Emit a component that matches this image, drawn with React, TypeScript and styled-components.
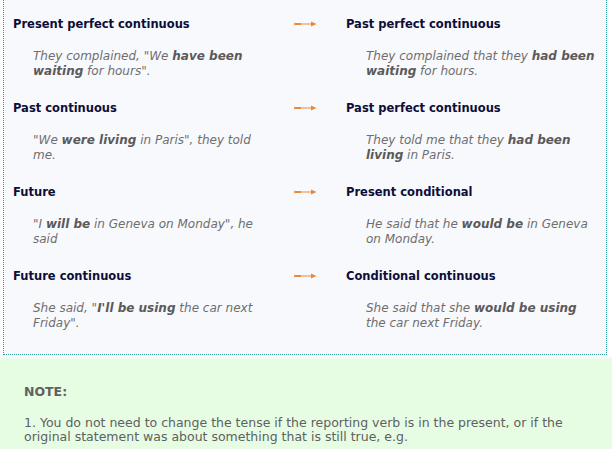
import styled, { createGlobalStyle } from 'styled-components'

const GlobalStyle = createGlobalStyle`
  html, body {
    margin: 0;
    padding: 0;
    background: #ffffff;
  }

  body {
    font-family: 'DejaVu Sans', Verdana, sans-serif;
  }
`

const PageStyled = styled.div`
  width: 612px;
  height: 449px;
  overflow: hidden;
`

const TableBoxStyled = styled.div`
  margin-left: 3px;
  width: 604px;
  padding: 16px 0 23px 9px;
  box-sizing: border-box;

  background-color: #f8f9fd;
  border: 1px dotted #2a9d9d;
  border-top: 0;
`

const RowStyled = styled.div`
  display: grid;
  grid-template-columns: 280px 53px 1fr;
  margin-bottom: 21px;

  &:last-child {
    margin-bottom: 0;
  }
`

const CellStyled = styled.div`
  display: flex;
  flex-direction: column;
  gap: 17px;
`

const TenseStyled = styled.div`
  height: 16px;
  font-size: 11.5px;
  line-height: 16px;
  font-weight: bold;
  color: #0d0d38;
`

const ExampleStyled = styled.div<{ $width: number }>`
  width: ${({ $width }) => $width}px;
  padding-left: 20px;

  font-size: 12px;
  line-height: 15px;
  font-style: italic;
  color: #6e6e6e;

  & b {
    color: #5a5a5a;
  }
`

const ArrowCellStyled = styled.div`
  height: 16px;
  display: flex;
  align-items: center;
`

const NoteStyled = styled.div`
  margin-top: 2px;
  padding: 26px 14px 20px 24px;

  background-color: #e6fde4;
  border-top: 2px solid #effdec;

  font-size: 12.5px;
  line-height: 14px;
  color: #606060;
`

const NoteTitleStyled = styled.div`
  font-weight: bold;
  margin-bottom: 17px;
`

const Arrow = () => (
  <svg width="24" height="6" viewBox="0 0 24 6">
    <path d="M1 1.5 L4 3 L1 4.5 Z" fill="#eaa060" />
    <rect x="2" y="2" width="6" height="2" fill="#e88a3a" />
    <rect x="8" y="2.5" width="12" height="1" fill="#e88a3a" />
    <path d="M18 0.5 L23.5 3 L18 5.5 Z" fill="#e88a3a" />
  </svg>
)

type Row = {
  from: string
  to: string
  direct: React.ReactNode
  reported: React.ReactNode
}

const rows: Row[] = [
  {
    from: 'Present perfect continuous',
    to: 'Past perfect continuous',
    direct: (
      <>
        They complained, "We <b>have been waiting</b> for hours".
      </>
    ),
    reported: (
      <>
        They complained that they <b>had been waiting</b> for hours.
      </>
    ),
  },
  {
    from: 'Past continuous',
    to: 'Past perfect continuous',
    direct: (
      <>
        "We <b>were living</b> in Paris", they told me.
      </>
    ),
    reported: (
      <>
        They told me that they <b>had been living</b> in Paris.
      </>
    ),
  },
  {
    from: 'Future',
    to: 'Present conditional',
    direct: (
      <>
        "I <b>will be</b> in Geneva on Monday", he said
      </>
    ),
    reported: (
      <>
        He said that he <b>would be</b> in Geneva on Monday.
      </>
    ),
  },
  {
    from: 'Future continuous',
    to: 'Conditional continuous',
    direct: (
      <>
        She said, "<b>I'll be using</b> the car next Friday".
      </>
    ),
    reported: (
      <>
        She said that she <b>would be using</b> the car next Friday.
      </>
    ),
  },
]

export default function App() {
  return (
    <PageStyled>
      <GlobalStyle />

      <TableBoxStyled>
        {rows.map((row) => (
          <RowStyled key={row.from}>
            <CellStyled>
              <TenseStyled>{row.from}</TenseStyled>
              <ExampleStyled $width={232}>{row.direct}</ExampleStyled>
            </CellStyled>

            <ArrowCellStyled>
              <Arrow />
            </ArrowCellStyled>

            <CellStyled>
              <TenseStyled>{row.to}</TenseStyled>
              <ExampleStyled $width={232}>{row.reported}</ExampleStyled>
            </CellStyled>
          </RowStyled>
        ))}
      </TableBoxStyled>

      <NoteStyled>
        <NoteTitleStyled>NOTE:</NoteTitleStyled>
        1. You do not need to change the tense if the reporting verb is in the
        present, or if the original statement was about something that is
        still true, e.g.
      </NoteStyled>
    </PageStyled>
  )
}
